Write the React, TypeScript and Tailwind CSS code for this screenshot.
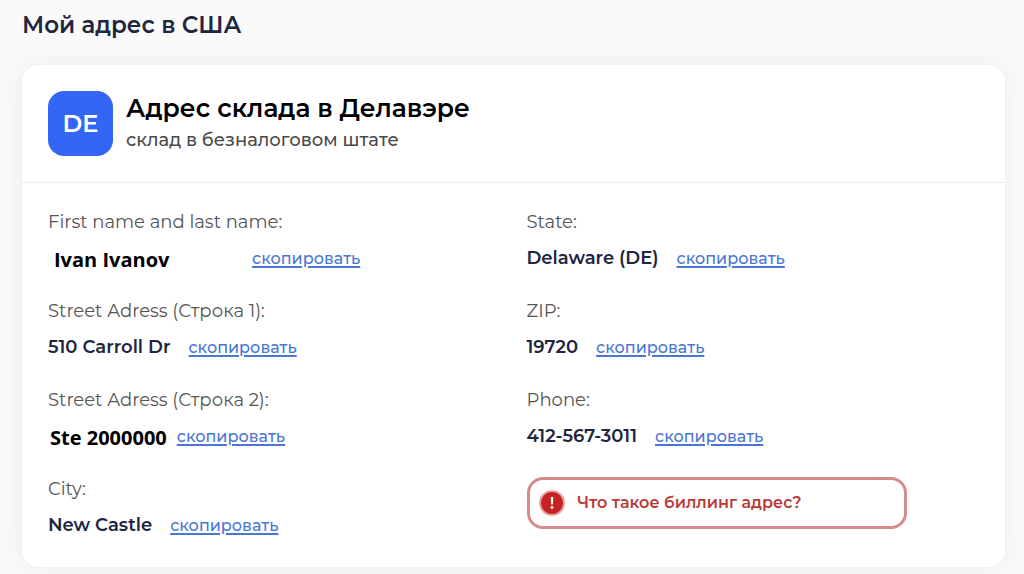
import React from 'react'
import { useState } from 'react'

interface AddressField {
    label: string;
    value: string;
    edited?: string;
}

const leftColumn: AddressField[] = [
    { label: 'First name and last name:', value: 'Ivan Ivanov', edited: 'w-[186px] pl-1.5' },
    { label: 'Street Adress (Строка 1):', value: '510 Carroll Dr' },
    { label: 'Street Adress (Строка 2):', value: 'Ste 2000000', edited: 'pl-0.5 -mr-2' },
    { label: 'City:', value: 'New Castle' },
];

const rightColumn: AddressField[] = [
    { label: 'State:', value: 'Delaware (DE)' },
    { label: 'ZIP:', value: '19720' },
    { label: 'Phone:', value: '412-567-3011' },
];

const Field = ({ field }: { field: AddressField }) => {
    const [copied, setCopied] = useState(false);

    const handleCopy = () => {
        navigator.clipboard?.writeText(field.value);
        setCopied(true);
    };

    return (
        <div>
            <dt className="text-lg leading-6 text-[#555555]">{field.label}</dt>
            <dd className="mt-2.5 flex h-7 items-center gap-[18px]">
                {field.edited ? (
                    <span className={`whitespace-nowrap pt-1 font-['Open_Sans','Noto_Sans',sans-serif] text-xl font-bold text-black ${field.edited}`}>{field.value}</span>
                ) : (
                    <span className="whitespace-nowrap text-lg font-semibold text-[#20263f]">{field.value}</span>
                )}
                <button onClick={handleCopy} data-copied={copied} className="cursor-pointer pt-0.5 text-base font-medium text-[#4a76d4] underline decoration-2 underline-offset-2">скопировать</button>
            </dd>
        </div>
    )
}

const App = () => {
    return (
        <main className="min-h-screen bg-[#fafafa] pb-2 pl-[22px] pr-[19px] pt-[9px] font-['Montserrat','Inter',sans-serif]">
            <h1 className="text-[23px] font-semibold leading-8 text-[#20263f]">Мой адрес в США</h1>

            <section className="mt-6 rounded-2xl bg-white shadow-[0_0_30px_rgba(0,0,0,0.06)] ring-1 ring-[#f1f1f1]">
                <header className="flex items-center gap-[13px] border-b border-[#ebebeb] p-[26px]">
                    <div className="flex size-[65px] shrink-0 items-center justify-center rounded-2xl bg-[#3366f6] text-2xl font-semibold text-white">DE</div>
                    <div className="pt-px">
                        <h2 className="text-[25px] font-semibold leading-8 text-black">Адрес склада в Делавэре</h2>
                        <p className="text-lg font-medium leading-8 text-[#4a4a4a]">склад в безналоговом штате</p>
                    </div>
                </header>

                <div className="grid grid-cols-2 gap-[26px] px-[26px] pb-7 pt-[27px]">
                    <dl className="flex flex-col gap-[27px]">
                        {leftColumn.map((field, index) => (
                            <Field key={index} field={field} />
                        ))}
                    </dl>

                    <div className="flex flex-col gap-[27px]">
                        <dl className="flex flex-col gap-[27px]">
                            {rightColumn.map((field, index) => (
                                <Field key={index} field={field} />
                            ))}
                        </dl>

                        <a href="#billing" className="flex w-[380px] max-w-full items-center gap-3 rounded-2xl border-3 border-[#d58a8c] px-2 py-[9px] text-base font-semibold leading-7 text-[#b93a38]">
                            <svg className="size-7 shrink-0" viewBox="0 0 28 28" aria-hidden="true">
                                <circle cx="14" cy="14" r="13" fill="#e9a5a3" />
                                <circle cx="14" cy="14" r="11" fill="#c62422" />
                                <path d="M12.8 8h2.4l-.3 7.4h-1.8z" fill="#fff" />
                                <circle cx="14" cy="18.4" r="1.4" fill="#fff" />
                            </svg>
                            Что такое биллинг адрес?
                        </a>
                    </div>
                </div>
            </section>
        </main>
    )
}

export default App
